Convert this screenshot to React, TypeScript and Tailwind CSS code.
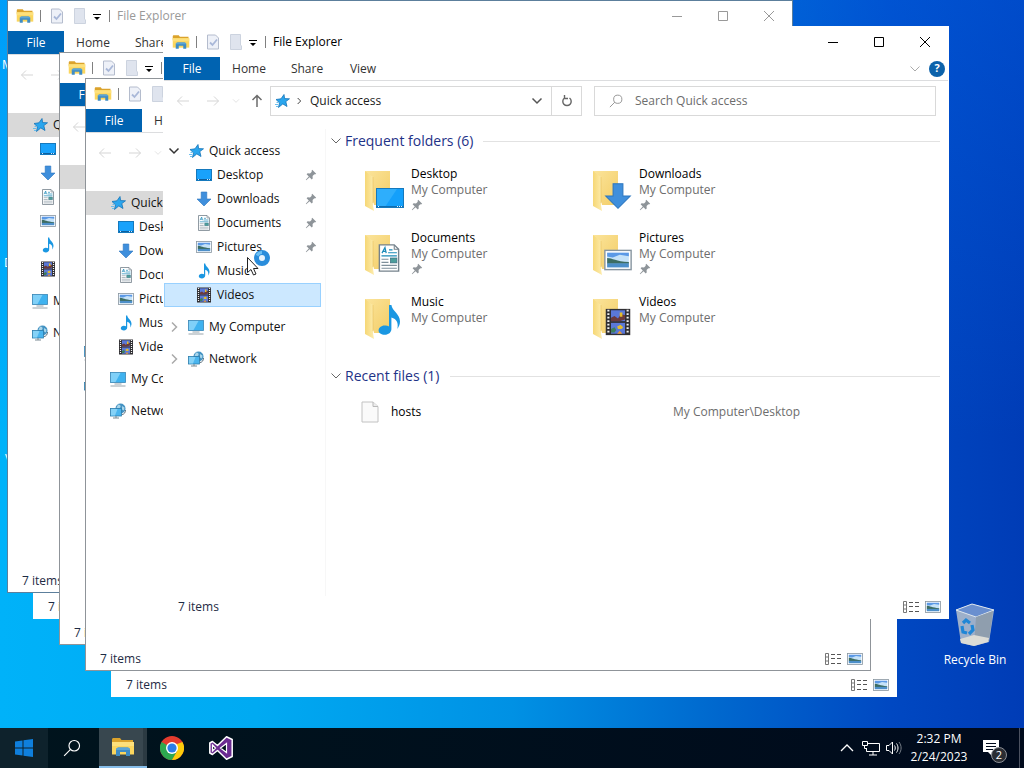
import { ReactNode, useState } from "react";
import { clsx } from "clsx";

type IconProps = { className?: string };
type IconKind = (props: IconProps) => ReactNode;

/* ---------- line glyphs ---------- */

function ChevronDown({ className }: IconProps) {
    return (
        <svg className={className} viewBox="0 0 12 12" fill="none" stroke="currentColor">
            <path d="M1.500 3.500 6 8l4.500-4.500" />
        </svg>
    );
}

function ChevronRight({ className }: IconProps) {
    return (
        <svg className={className} viewBox="0 0 12 12" fill="none" stroke="currentColor">
            <path d="m4 1.500 4.500 4.500L4 10.500" />
        </svg>
    );
}

function Arrow({ className }: IconProps) {
    return (
        <svg className={className} viewBox="0 0 14 14" fill="none" stroke="currentColor">
            <path d="M13 7H1.500M6 2.500 1.500 7 6 11.500" />
        </svg>
    );
}

function SearchIcon({ className }: IconProps) {
    return (
        <svg className={className} viewBox="0 0 16 16" fill="none" stroke="currentColor">
            <circle cx="10" cy="6" r="4.700" />
            <path d="M6.700 9.300 1 15" />
        </svg>
    );
}

function PinIcon({ className }: IconProps) {
    return (
        <svg className={className} viewBox="0 0 12 12" fill="#8e9499">
            <path d="M7.200.8 11.200 4.800 10 5.500 9.300 5.200 7.600 7l.1 2.400-1 1L4.600 8.200 1.200 11.200.8 10.800 3.800 7.400 1.600 5.300l1-1L5 4.400l1.800-1.700-.3-.7z" />
        </svg>
    );
}

/* ---------- small colour icons ---------- */

function StarIcon({ className }: IconProps) {
    return (
        <svg className={className} viewBox="0 0 16 16">
            <path d="M10 1.500 10.600 5.600 15.500 5.800 11.800 8.600 13 13.500 8.800 10.900 4.500 14.500 5.500 9.800 2 6.500 7 5.800z" fill="#2aa6ee" stroke="#1573b8" strokeWidth=".8" />
            <path d="M1 11.500h3M2 13.500h2M2.500 9.500h2" stroke="#5bb9ee" strokeWidth=".9" />
        </svg>
    );
}

function DesktopIcon({ className }: IconProps) {
    return (
        <svg className={className} viewBox="0 0 16 16">
            <rect x=".5" y="2.500" width="15" height="11" fill="#19a2fb" stroke="#1579bd" />
            <path d="M1 12.500h14" stroke="#0e5f9d" />
            <path d="M2 12.500h1M11 12.500h1M13 12.500h1" stroke="#cfeaff" />
        </svg>
    );
}

function DesktopLargeIcon({ className }: IconProps) {
    return (
        <svg className={className} viewBox="0 0 28 28">
            <rect x=".5" y="4.500" width="27" height="19" fill="#14a0fb" stroke="#1579bd" />
            <path d="M1 5h20L9 23H1z" fill="#2eaefc" />
            <path d="M1 22.500h26" stroke="#0e6db0" />
            <path d="M2 22.500h1M21 22.500h1M23 22.500h1M25 22.500h1" stroke="#e6f5ff" />
        </svg>
    );
}

function DownloadsIcon({ className }: IconProps) {
    return (
        <svg className={className} viewBox="0 0 16 16">
            <path d="M5.200 1h5.600v7h4.200L8 15 1 8h4.200z" fill="#3f8fdc" stroke="#2b76c0" strokeWidth=".6" />
        </svg>
    );
}

function DocumentsIcon({ className }: IconProps) {
    return (
        <svg className={className} viewBox="0 0 16 16">
            <path d="M2.500.5H11L13.500 3v12.500h-11z" fill="#fff" stroke="#75828c" strokeWidth=".8" />
            <path d="M11 .5V3h2.500" fill="none" stroke="#75828c" strokeWidth=".6" />
            <path d="m4 5.200 1.700-3.200.7 3.200M4.700 4.200h1.700M8 3.300h2M7.500 5h5M3.700 6.800h8.800" stroke="#1b8ab8" strokeWidth=".7" fill="none" />
            <path d="M3.700 8.700h4M3.700 10.500h4M3.700 12.200h8.800M3.700 13.900h8.800" stroke="#7e8f9a" strokeWidth=".6" />
            <rect x="8.800" y="8" width="3.700" height="2.800" fill="#4c9e9b" stroke="#3c6c80" strokeWidth=".4" />
        </svg>
    );
}

function PicturesIcon({ className }: IconProps) {
    return (
        <svg className={className} viewBox="0 0 16 16">
            <rect x=".5" y="2.500" width="15" height="11" fill="#fff" stroke="#8795a0" strokeWidth=".8" />
            <rect x="1.800" y="3.800" width="12.400" height="8.400" fill="#c5e2f8" />
            <path d="M1.800 3.800h12.400v2L9 5 5 6.500 1.800 6z" fill="#5b99e6" />
            <path d="M1.800 6.800c3 0 5 2 12.400 2.400v1H1.800z" fill="#3d6d63" />
            <path d="M1.800 9.900h12.400v2.300H1.800z" fill="#4d8fc9" />
        </svg>
    );
}

function MusicIcon({ className }: IconProps) {
    return (
        <svg className={className} viewBox="0 0 16 16">
            <path d="M8 .5h1.200c.3 3 4.300 4.300 4.300 8.300 0 1.500-.6 2.700-1.300 3.700.6-3-.3-5-3-5.700v5.700c0 1.700-1.500 2.900-3.300 2.900S2.800 14.600 2.800 13.300s1.300-2.500 3-2.500c.9 0 1.700.2 2.200.5z" fill="#1a97e2" />
        </svg>
    );
}

function VideosIcon({ className }: IconProps) {
    return (
        <svg className={className} viewBox="0 0 16 16">
            <rect x="1" y=".5" width="14" height="15" fill="#302f33" />
            <path d="M2.500 1v14M13.500 1v14" stroke="#f2f2f2" strokeWidth="1.200" strokeDasharray="1 1" />
            <rect x="4" y="1.300" width="8" height="6.200" fill="#5a78d8" />
            <rect x="4" y="8.500" width="8" height="6.200" fill="#5a78d8" />
            <path d="M4 5.500 6 4.500 8 6l1.500-2.500 2.500.5v2.500L9 7.500H4z" fill="#6b3a3c" />
            <path d="M9 2.500h1.500v2.500H9zM7.500 10.500l2-1 1.500 1.500-1 1h-2z" fill="#e3bd2c" />
            <path d="m4 12 2-1 1 1.500-1 1.500H4z" fill="#3d7f5b" />
            <path d="m7.500 14.700 1.500-1.700 1.500 1.700z" fill="#f09a2b" />
        </svg>
    );
}

function ComputerIcon({ className }: IconProps) {
    return (
        <svg className={className} viewBox="0 0 16 16">
            <rect x=".5" y="1.500" width="15" height="10" fill="#3fb2ef" stroke="#3a86b5" strokeWidth=".8" />
            <path d="M1 2h9.500L5.500 11H1z" fill="#7fd0f8" />
            <path d="M4.500 13h7M.5 15h15" stroke="#8c9aa3" strokeWidth=".9" />
        </svg>
    );
}

function NetworkIcon({ className }: IconProps) {
    return (
        <svg className={className} viewBox="0 0 16 16">
            <circle cx="10.500" cy="5.500" r="5" fill="#4392c2" />
            <path d="M8 1.500c2 0 3 1 2.500 2.500S8 5 6.500 5M12 3l2.500 1.500-.5 3-2-1z" fill="#a8d5ea" />
            <path d="M12 11.500c2 0 3.500-2 3.500-4.500" stroke="#5c6f7c" fill="none" />
            <rect x=".5" y="5.500" width="11" height="7.500" fill="#4ab5ee" stroke="#2f7dab" strokeWidth=".8" />
            <path d="M1 6h6.500L5 12.500H1z" fill="#85d2f7" />
            <path d="M3 15h6M6 13v2" stroke="#7b8a93" />
        </svg>
    );
}

function ExplorerIcon({ className }: IconProps) {
    return (
        <svg className={className} viewBox="0 0 24 20">
            <path d="M1 2.500C1 1.700 1.600 1 2.500 1H9l1.500 2H22v4H1z" fill="#dba32c" />
            <path d="M1 5h22v12.500H1z" fill="#fbd65e" />
            <path d="M1 5h22v4H1z" fill="#fde07c" />
            <path d="M5 19v-6c0-1.500 1-2.500 2.500-2.500h9c1.500 0 2.500 1 2.500 2.500v6h-4v-4H9v4z" fill="#3f8cc4" />
            <path d="M5 13c0-1.500 1-2.500 2.500-2.500h9c1.500 0 2.500 1 2.500 2.500z" fill="#5ba5d6" />
        </svg>
    );
}

function PropertiesIcon({ className }: IconProps) {
    return (
        <svg className={className} viewBox="0 0 14 16" fill="none">
            <path d="M1.500 1h8l3 3v11h-11z" fill="#eef1f8" stroke="#b4bccd" />
            <path d="m4 8.500 2.500 2.500L11 5.500" stroke="#a9b8d8" strokeWidth="1.800" />
        </svg>
    );
}

function NewFolderIcon({ className }: IconProps) {
    return (
        <svg className={className} viewBox="0 0 14 16">
            <path d="M1.500.5h10v10.500l1 1v3.500h-11z" fill="#dfe4ee" stroke="#ccd3df" />
        </svg>
    );
}

function BlankFileIcon({ className }: IconProps) {
    return (
        <svg className={className} viewBox="0 0 18 22">
            <path d="M1 1h11l5 4.500V21H1z" fill="#fafafa" stroke="#c2c2c2" />
            <path d="M12 1v4.500h5" fill="#ececec" stroke="#b9b9b9" />
        </svg>
    );
}

function DetailsViewIcon({ className }: IconProps) {
    return (
        <svg className={className} viewBox="0 0 16 12" fill="none" stroke="#777">
            <path d="M.5.5h3v11h-3zM.5 4h3M.5 8h3" />
            <path d="M6 1.500h4M12 1.500h4M6 5.500h4M12 5.500h4M6 10.500h4M12 10.500h4" stroke="#555" />
        </svg>
    );
}

function FolderIcon({ className }: IconProps) {
    return (
        <svg className={className} viewBox="0 0 30 42">
            <defs>
                <linearGradient id="folder-back" x1="0" x2="1" y1="0" y2="1">
                    <stop offset="0" stopColor="#fbe49b" />
                    <stop offset="1" stopColor="#f3cd66" />
                </linearGradient>
                <linearGradient id="folder-flap" x1="0" x2="1">
                    <stop offset="0" stopColor="#f6d775" />
                    <stop offset="1" stopColor="#fdecae" />
                </linearGradient>
            </defs>
            <path d="M1 1h25v34H10z" fill="url(#folder-back)" />
            <path d="m1 1 8 6v28l1 6-9-5z" fill="url(#folder-flap)" />
            <path d="M9 7v26" stroke="#e6bf5b" strokeWidth=".6" />
        </svg>
    );
}

/* ---------- data ---------- */

type Folder = { name: string; Icon: IconKind; LargeIcon?: IconKind; pinned: boolean; overlay: string };

const folders: Folder[] = [
    { name: "Desktop", Icon: DesktopIcon, LargeIcon: DesktopLargeIcon, pinned: true, overlay: "left-3 top-[14px] size-7" },
    { name: "Downloads", Icon: DownloadsIcon, pinned: true, overlay: "left-3 top-[12px] size-7" },
    { name: "Documents", Icon: DocumentsIcon, pinned: true, overlay: "left-[11px] top-[10px] size-7" },
    { name: "Pictures", Icon: PicturesIcon, pinned: true, overlay: "left-3 top-3 size-7" },
    { name: "Music", Icon: MusicIcon, pinned: false, overlay: "left-[9px] top-[6px] size-8" },
    { name: "Videos", Icon: VideosIcon, pinned: false, overlay: "left-3 top-[10px] size-7" },
];

type WindowState = { id: number; position: string; frame: string; active?: boolean; covered?: boolean };

// back to front; a covered window only shows its status bar
const windows: WindowState[] = [
    { id: 1, position: "left-[34px] top-[27px]", frame: "outline-white", covered: true },
    { id: 0, position: "left-[8px] top-[1px]", frame: "outline-[#5c7f9c]" },
    { id: 2, position: "left-[60px] top-[53px]", frame: "outline-[#8f9499]" },
    { id: 4, position: "left-[112px] top-[105px]", frame: "outline-white", covered: true },
    { id: 3, position: "left-[86px] top-[79px]", frame: "outline-[#8f9499]" },
    { id: 6, position: "left-[164px] top-[27px]", frame: "outline-white", active: true },
];

/* ---------- explorer window ---------- */

function TitleBar({ active }: { active?: boolean }) {
    const tone = active ? "text-black" : "text-[#999]";
    return (
        <header className={clsx("flex h-[30px] items-center", tone)}>
            <ExplorerIcon className="ml-2 h-4 w-[18px]" />
            <span className="ml-[6px] h-3 w-px bg-[#808080]" />
            <button aria-label="Properties" className="ml-[9px]"><PropertiesIcon className="h-4 w-[14px]" /></button>
            <button aria-label="New folder" className="ml-[9px]"><NewFolderIcon className="h-4 w-[14px]" /></button>
            <button aria-label="Customize Quick Access Toolbar" className="ml-[6px] text-black">
                <svg className="h-3 w-2" viewBox="0 0 8 12" fill="currentColor">
                    <path d="M0 4h8v1H0zM1 7h6l-3 3z" />
                </svg>
            </button>
            <span className="ml-2 h-3 w-px bg-[#808080]" />
            <h2 className="ml-[7px] flex-1">File Explorer</h2>
            <button aria-label="Minimize" className="flex h-full w-[46px] items-center justify-center">
                <svg className="size-3" viewBox="0 0 12 12" stroke="currentColor"><path d="M1 6.500h10" /></svg>
            </button>
            <button aria-label="Maximize" className="flex h-full w-[46px] items-center justify-center">
                <svg className="size-3" viewBox="0 0 12 12" fill="none" stroke="currentColor"><path d="M1.500 1.500h9v9h-9z" /></svg>
            </button>
            <button aria-label="Close" className="flex h-full w-[46px] items-center justify-center">
                <svg className="size-3" viewBox="0 0 12 12" stroke="currentColor"><path d="m1 1 10 10M11 1 1 11" /></svg>
            </button>
        </header>
    );
}

function Ribbon({ active }: { active?: boolean }) {
    return (
        <div className="flex h-6 border-b border-[#dcdddf] text-[#333]">
            <button className="w-14 bg-[#0063b1] text-white">File</button>
            <button className="w-[58px]">Home</button>
            <button className="w-[58px]">Share</button>
            {active && (
                <>
                    <button className="w-[54px]">View</button>
                    <button aria-label="Expand the Ribbon" className="ml-auto mr-2 text-[#aaa]"><ChevronDown className="size-3" /></button>
                    <button aria-label="Help" className="mr-[3px] self-center">
                        <span className="flex size-4 items-center justify-center rounded-full bg-[#0c62ab] text-[11px] font-bold text-white">?</span>
                    </button>
                </>
            )}
        </div>
    );
}

function AddressBar({ active }: { active?: boolean }) {
    const [query, setQuery] = useState("");
    return (
        <div className="mt-[5px] flex h-[30px] items-stretch pr-3">
            <div className="flex w-[106px] items-center text-[#d5d5d5]">
                <button aria-label="Back" className="ml-3"><Arrow className="size-[14px]" /></button>
                <button aria-label="Forward" className="ml-4"><Arrow className="size-[14px] rotate-180" /></button>
                <button aria-label="Recent locations" className="ml-3"><ChevronDown className="size-2" /></button>
                <button aria-label="Up" className="ml-[10px] text-[#6b6b6b]"><Arrow className="size-[14px] rotate-90 stroke-[1.5]" /></button>
            </div>
            {active && (
                <>
                    <div className="flex flex-1 items-center border border-[#d9d9d9] text-[#1a1a1a]">
                        <StarIcon className="ml-[3px] size-4" />
                        <ChevronRight className="ml-[5px] size-2 stroke-[1.5] text-[#444]" />
                        <button className="ml-[7px]">Quick access</button>
                        <button aria-label="Previous locations" className="ml-auto mr-2 text-[#555]"><ChevronDown className="size-3 stroke-[1.5]" /></button>
                        <button aria-label="Refresh" className="flex w-[30px] items-center justify-center self-stretch border-l border-[#d9d9d9] text-[#666]">
                            <svg className="size-3" viewBox="0 0 12 12" fill="none" stroke="currentColor" strokeWidth="1.400">
                                <path d="M8.500 3A4.200 4.200 0 1 1 3.500 3M3.500 0v3.500H7" />
                            </svg>
                        </button>
                    </div>
                    <label className="ml-3 flex w-[342px] items-center border border-[#d9d9d9] text-[#8a8a8a]">
                        <SearchIcon className="ml-[14px] size-[14px]" />
                        <input
                            type="text"
                            aria-label="Search Quick access"
                            placeholder="Search Quick access"
                            value={query}
                            onChange={(e) => setQuery(e.target.value)}
                            className="ml-3 min-w-0 flex-1 bg-transparent outline-none placeholder:text-[#6d6d6d]"
                        />
                    </label>
                </>
            )}
        </div>
    );
}

function NavigationPane({ active }: { active?: boolean }) {
    return (
        <nav className="w-[157px] shrink-0 text-[#111]">
            <a href="#quick-access" className={clsx("flex h-6 items-center", !active && "bg-[#d9d9d9]")}>
                <span className="ml-1 w-3">{active && <ChevronDown className="size-3 stroke-[1.5] text-[#333]" />}</span>
                <StarIcon className="ml-2 size-4" />
                <span className="ml-[5px] whitespace-nowrap">Quick access</span>
            </a>
            {folders.map(({ name, Icon, pinned }) => (
                <a
                    key={name}
                    href={`#${name.toLowerCase()}`}
                    className={clsx(
                        "flex h-6 items-center border pl-[31px] pr-[3px]",
                        active && name === "Videos" ? "border-[#99d1ff] bg-[#cce8ff]" : "border-transparent"
                    )}
                >
                    <Icon className="size-4" />
                    <span className="ml-[5px] flex-1">{name}</span>
                    {active && pinned && <PinIcon className="size-3" />}
                </a>
            ))}
            <a href="#computer" className="mt-2 flex h-6 items-center">
                <span className="ml-1 w-3">{active && <ChevronRight className="size-3 stroke-[1.5] text-[#aaa]" />}</span>
                <ComputerIcon className="ml-2 size-4" />
                <span className="ml-[5px] whitespace-nowrap">My Computer</span>
            </a>
            <a href="#network" className="mt-2 flex h-6 items-center">
                <span className="ml-1 w-3">{active && <ChevronRight className="size-3 stroke-[1.5] text-[#aaa]" />}</span>
                <NetworkIcon className="ml-2 size-4" />
                <span className="ml-[5px] whitespace-nowrap">Network</span>
            </a>
        </nav>
    );
}

function GroupHeading({ children }: { children: string }) {
    return (
        <div className="flex h-6 items-center">
            <ChevronDown className="mr-[3px] size-3 text-[#666]" />
            <h3 className="text-[14px] text-[#1e3287]">{children}</h3>
            <span className="ml-[10px] h-px flex-1 bg-[#e2e2e2]" />
        </div>
    );
}

function QuickAccessView() {
    return (
        <main className="-mt-[10px] ml-1 flex-1 border-l border-[#f7f7f7] pl-1 pr-2">
            <GroupHeading>Frequent folders (6)</GroupHeading>
            <ul className="ml-[34px] mt-[13px] grid grid-cols-[228px_228px]">
                {folders.map(({ name, Icon, LargeIcon = Icon, pinned, overlay }) => (
                    <li key={name} className="flex h-16">
                        <span className="relative mt-1 h-[42px] w-[47px]">
                            <FolderIcon className="h-[42px] w-[30px]" />
                            <LargeIcon className={clsx("absolute", overlay)} />
                        </span>
                        <div className="leading-4">
                            <p className="text-black">{name}</p>
                            <p className="text-[#6d6d6d]">My Computer</p>
                            {pinned && <PinIcon className="mt-[1px] size-3" />}
                        </div>
                    </li>
                ))}
            </ul>
            <div className="mt-[6px]">
                <GroupHeading>Recent files (1)</GroupHeading>
            </div>
            <div className="ml-[31px] mt-3 flex h-6 items-center">
                <BlankFileIcon className="h-[22px] w-[18px]" />
                <span className="ml-3 w-[282px] text-black">hosts</span>
                <span className="text-[#6d6d6d]">My Computer\Desktop</span>
            </div>
        </main>
    );
}

function ExplorerWindow({ position, frame, active, covered }: WindowState) {
    return (
        <section
            className={clsx(
                "absolute flex h-[591px] w-[784px] flex-col overflow-hidden bg-white outline-1",
                position,
                frame
            )}
        >
            {!covered && (
                <>
                    <TitleBar active={active} />
                    <Ribbon active={active} />
                    <AddressBar active={active} />
                    <div className="mt-[23px] flex flex-1">
                        <NavigationPane active={active} />
                        {active && <QuickAccessView />}
                    </div>
                </>
            )}
            <footer className="mt-auto flex h-[22px] items-center pl-[14px] pr-[7px] text-[#1e2b45]">
                <span className="flex-1">7 items</span>
                <button aria-label="Details"><DetailsViewIcon className="h-3 w-4" /></button>
                <button aria-label="Large icons" className="ml-[6px]"><PicturesIcon className="size-4" /></button>
            </footer>
        </section>
    );
}

/* ---------- desktop ---------- */

function RecycleBin() {
    return (
        <button className="absolute left-[939px] top-[602px] flex w-[72px] flex-col items-center whitespace-nowrap text-white">
            <svg className="h-[46px] w-10" viewBox="0 0 40 46">
                <path d="M1 8 17 2l22 6-5 32-15 4-13-3z" fill="#b9c3cc" fillOpacity=".85" />
                <path d="M1 8 17 2l22 6-18 7z" fill="#6a8fcf" stroke="#dfe7ee" />
                <path d="m21 15-2 28 15-4 4-30z" fill="#8f9eae" />
                <path d="m5 37 14-4 15 3-1 4-14 4-13-3z" fill="#dcdcd6" />
                <g fill="none" stroke="#1f86d6" strokeWidth="3.200">
                    <path d="m8 21 3-3 4 3" />
                    <path d="m7 24 1 6 4 1" />
                    <path d="m17 23 1 5-4 4" />
                </g>
            </svg>
            <span className="mt-1">Recycle Bin</span>
        </button>
    );
}

function BusyCursor() {
    return (
        <svg className="pointer-events-none absolute left-[246px] top-[248px] h-7 w-6" viewBox="0 0 24 28">
            <path d="M1.500 9.500v15l3.500-3 2.500 5.500 2.500-1-2.500-5.500H12z" fill="#fff" stroke="#222" />
            <circle cx="16" cy="10" r="5.500" fill="#e8f4fd" stroke="#2a8ddb" strokeWidth="5" />
            <path d="M11 7.500A5.600 5.600 0 0 1 16 4.500" fill="none" stroke="#6cc0f5" strokeWidth="3" />
        </svg>
    );
}

function Taskbar() {
    return (
        <footer className="flex h-10 items-stretch bg-linear-to-r from-[#00141d] to-[#000a1c] text-white">
            <button aria-label="Start" className="flex w-12 items-center justify-center bg-[#0e222c]">
                <svg className="size-[18px]" viewBox="0 0 18 18" fill="#0f7fdc">
                    <path d="M0 2.500 7.500 1.500v7H0zM8.500 1.300 18 0v8.500H8.500zM0 9.500h7.500v7L0 15.500zM8.500 9.500H18V18l-9.500-1.300z" />
                </svg>
            </button>
            <button aria-label="Search" className="flex w-12 items-center justify-center"><SearchIcon className="size-[18px]" /></button>
            <button aria-label="File Explorer" className="ml-[3px] flex w-12 items-center justify-center border-b-2 border-[#86bde9] bg-[#38474f] shadow-[inset_-4px_0_0_#2b3a42]">
                <ExplorerIcon className="h-5 w-6" />
            </button>
            <button aria-label="Google Chrome" className="ml-[1px] flex w-12 items-center justify-center">
                <svg className="size-6" viewBox="0 0 24 24">
                    <circle cx="12" cy="12" r="12" fill="#e33b2e" />
                    <path d="M1.600 6A12 12 0 0 0 12 24l5.200-9L12 12z" fill="#2da94f" />
                    <path d="M12 24A12 12 0 0 0 22.400 6H12l5.200 9z" fill="#fdcc0b" />
                    <path d="M22.400 6H12v4z" fill="#e33b2e" />
                    <circle cx="12" cy="12" r="6" fill="#fff" />
                    <circle cx="12" cy="12" r="4.600" fill="#2b7de9" />
                </svg>
            </button>
            <button aria-label="Visual Studio" className="ml-[1px] flex w-12 items-center justify-center">
                <svg className="size-6" viewBox="0 0 24 24">
                    <path d="M17.500.8 23.200 3.500v17l-5.700 2.700L8.500 14.500 3.500 18.500.8 17V7l2.700-1.500 5 4z" fill="#6b2c91" stroke="#fff" strokeWidth="1.500" strokeLinejoin="round" />
                    <path d="M17.500 7.500v9L11.500 12zM3.500 9v6l3-3z" fill="#00141d" stroke="#fff" strokeWidth="1.200" />
                </svg>
            </button>
            <div className="ml-auto flex items-center">
                <button aria-label="Show hidden icons">
                    <svg className="h-3 w-[14px]" viewBox="0 0 14 12" fill="none" stroke="currentColor" strokeWidth="1.300"><path d="m1 9 6-6 6 6" /></svg>
                </button>
                <button aria-label="Network" className="ml-2">
                    <svg className="h-4 w-[18px]" viewBox="0 0 18 16" fill="none" stroke="currentColor">
                        <path d="M6 3.500h11.500v8h-13V8M11 11.500V15M7 15h8M.5 1.500h5V5.500h-5zM2.500 5.500v3h2" />
                    </svg>
                </button>
                <button aria-label="Volume" className="ml-[6px]">
                    <svg className="size-4" viewBox="0 0 16 16" fill="none" stroke="currentColor">
                        <path d="M.5 5.500h2.500L6.500 2v12L3 10.500H.5z" />
                        <path d="M8.500 5.500c1 1.500 1 3.500 0 5M10.500 3.500c2 2.700 2 6.300 0 9" />
                        <path d="M13 2c2.800 3.700 2.800 8.300 0 12" stroke="#777f88" />
                    </svg>
                </button>
                <time dateTime="2023-02-24T14:32" className="w-[74px] text-center leading-[18px]">
                    2:32 PM
                    <br />
                    2/24/2023
                </time>
                <button aria-label="2 new notifications" className="relative ml-[7px] mr-3">
                    <svg className="h-6 w-6" viewBox="0 0 24 24">
                        <path d="M0 4h16v12H9v4l-4-4H0z" fill="#fff" />
                        <path d="M3 7.500h10M3 10.500h10M3 13.500h7" stroke="#000a1c" />
                    </svg>
                    <span className="absolute left-2 top-[11px] flex size-4 items-center justify-center rounded-full border border-[#8c8f96] bg-[#2a2d33] text-[11px]">2</span>
                </button>
                <span className="mr-1 h-10 w-px bg-[#4b5160]" />
            </div>
        </footer>
    );
}

export default function App() {
    return (
        <div className="flex h-screen flex-col overflow-hidden font-['Open_Sans','Noto_Sans',sans-serif] text-xs">
            <div className="relative flex-1 overflow-hidden bg-[linear-gradient(180deg,rgba(0,110,248,0.3),transparent_60%),linear-gradient(90deg,#00b2f9_0%,#00aaf2_25%,#0091e4_50%,#0068ce_70%,#0048c2_87%,#003cb6_100%)]">
                <span className="absolute left-[2px] top-[57px] whitespace-nowrap text-white">My Computer</span>
                <span className="absolute left-1 top-[255px] whitespace-nowrap text-white">Documents</span>
                <span className="absolute left-[5px] top-[451px] whitespace-nowrap text-white">Visual Studio</span>
                <RecycleBin />
                {windows.map((w) => (
                    <ExplorerWindow key={w.id} {...w} />
                ))}
                <BusyCursor />
            </div>
            <Taskbar />
        </div>
    );
}
